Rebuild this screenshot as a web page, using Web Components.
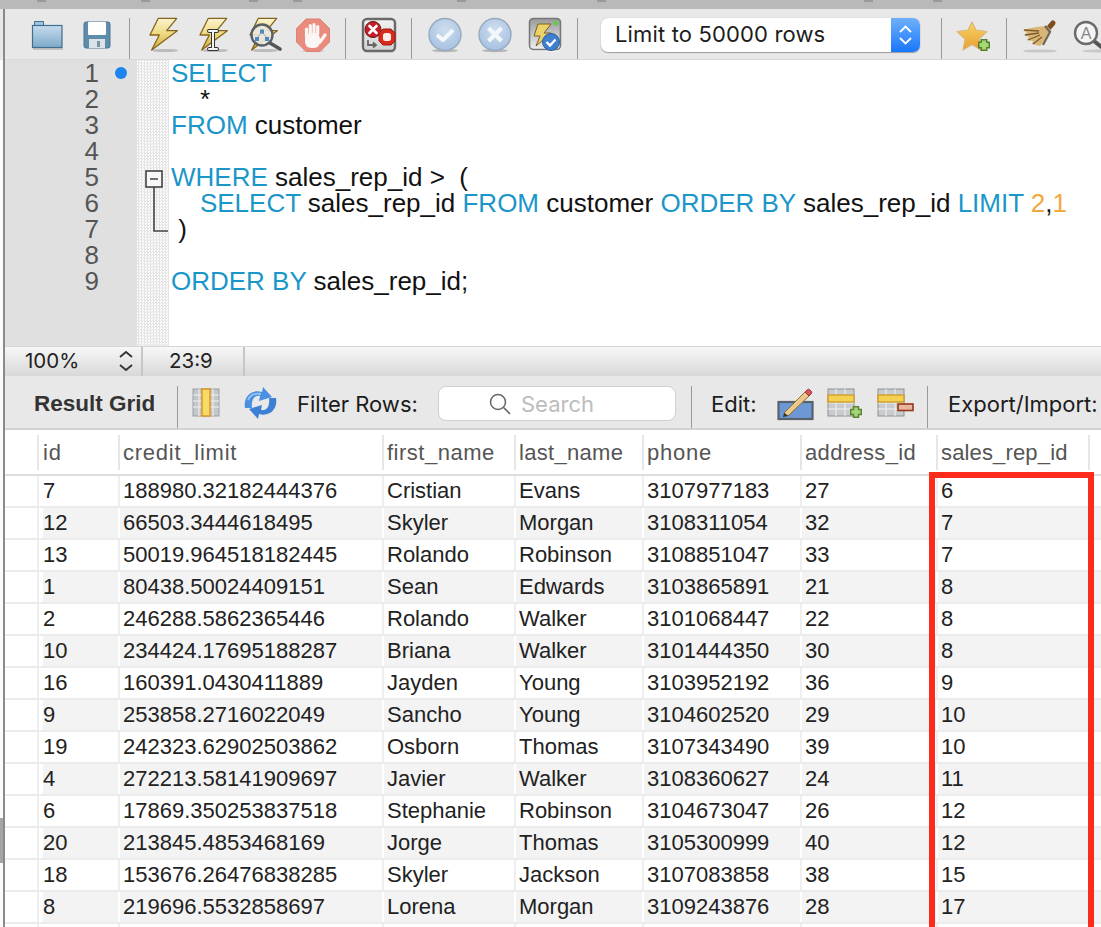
<!doctype html>
<html>
<head>
<meta charset="utf-8">
<title>Query</title>
<style>
  html, body { margin: 0; padding: 0; background: #fff; }
</style>
</head>
<body>
<wb-app>
  <wb-toolbar></wb-toolbar>
  <wb-editor></wb-editor>
  <wb-status></wb-status>
  <wb-result-bar></wb-result-bar>
  <wb-grid></wb-grid>
</wb-app>
<script>
const boltPts = '13.3,2.3 31.7,2.3 21.7,14.7 32.3,14.7 6.7,34 14.3,19 5,19';
const boltDefs = `<defs><linearGradient id="b" x1="0" y1="0" x2="0" y2="1"><stop offset="0" stop-color="#fbf5d2"/><stop offset=".45" stop-color="#efdb86"/><stop offset="1" stop-color="#d4ac3a"/></linearGradient></defs>`;
const bolt = `${boltDefs}<ellipse cx="20" cy="34.5" rx="13" ry="1.6" fill="#bbb"/><polygon points="${boltPts}" fill="url(#b)" stroke="#85651d" stroke-width="1.3" stroke-linejoin="round"/>`;
const roundDefs = `<defs><radialGradient id="r" cx=".5" cy=".35" r=".7"><stop offset="0" stop-color="#cfdeee"/><stop offset="1" stop-color="#a3bfe0"/></radialGradient></defs><ellipse cx="18" cy="34.6" rx="13" ry="1.6" fill="#b5b5b5"/><circle cx="18" cy="18.5" r="16" fill="url(#r)" stroke="#97a9bf" stroke-width="1.4"/>`;

const ICONS = {
  folder: `<defs><linearGradient id="f" x1="0" y1="0" x2="0" y2="1"><stop offset="0" stop-color="#c6dcee"/><stop offset="1" stop-color="#7ea9c8"/></linearGradient></defs>
    <rect x="4" y="32" width="30" height="2" fill="#c4c4c4"/>
    <path d="M5.5 9V5.5h9V9" fill="#a6c6de" stroke="#3d6f91"/><rect x="3.5" y="9.5" width="29.5" height="22" fill="url(#f)" stroke="#3d6f91" stroke-width="1.2"/>`,
  floppy: `<rect x="5" y="6" width="26" height="26" rx="2" fill="#5e8dac" stroke="#4a7492"/><rect x="9" y="6" width="18" height="13" rx="1" fill="#fff"/><rect x="10" y="23" width="16" height="9" fill="#dbe3e8"/><rect x="18" y="25" width="3" height="6" fill="#7f929f"/>`,
  bolt: bolt,
  boltI: `${bolt}<path d="M14 15h8M18 15v18M14 33h8" fill="none" stroke="#333" stroke-width="4" stroke-linecap="round"/><path d="M14 15h8M18 15v18M14 33h8" fill="none" stroke="#f4f4f4" stroke-width="2" stroke-linecap="round"/>`,
  boltFind: `${bolt}<path d="M25 27L35 33" stroke="#555" stroke-width="3.6" stroke-linecap="round"/><circle cx="17" cy="19" r="10.5" fill="#e9e8dc" fill-opacity=".9" stroke="#5a5f66" stroke-width="2.4"/><path d="M12 22l5-6 5 6" fill="none" stroke="#8ea9cf"/><rect x="15" y="13.5" width="4" height="4" fill="#4d85c9"/><rect x="10" y="21" width="4" height="4" fill="#4d85c9"/><rect x="20" y="21" width="4" height="4" fill="#4d85c9"/>`,
  stop: `<ellipse cx="18" cy="35" rx="12" ry="1.2" fill="#ccc"/><polygon points="11,3 25,3 34.5,12.5 34.5,26 25,35.5 11,35.5 1.5,26 1.5,12.5" fill="#e98c7d" stroke="#dc8273" stroke-width="1"/>
    <g stroke="#fbf5f3" stroke-width="3.2" stroke-linecap="round" fill="none"><path d="M11.5 21V13M15.3 18V9.5M19 18V8.5M22.7 18V10.5M25 26L30 19"/></g><rect x="10" y="17" width="15" height="15" rx="6" fill="#fbf5f3"/>`,
  stopErr: `<defs><linearGradient id="s" x1="0" y1="0" x2="0" y2="1"><stop offset="0" stop-color="#f2f2f2"/><stop offset="1" stop-color="#d2d2d2"/></linearGradient></defs><rect x="2" y="3" width="32" height="32" rx="4" fill="url(#s)" stroke="#6a6a6a" stroke-width="2.4"/>
    <circle cx="12" cy="13.5" r="8" fill="#c41f2b" stroke="#611"/><path d="M8.5 10l7 7M15.5 10l-7 7" stroke="#fff" stroke-width="2.6" stroke-linecap="round"/>
    <polygon points="22,13 30,13 34,17 34,25 30,29 22,29 18,25 18,17" fill="#d92b1c" stroke="#9c1d12"/><rect x="22" y="17" width="8" height="8" rx="2.5" fill="#fdeee9"/>
    <path d="M7 24v5h7M12 26.5l3 2.5-3 2.5" fill="none" stroke="#666" stroke-width="1.8"/>`,
  check: `${roundDefs}<path d="M10 19l6 5 10-10" fill="none" stroke="#f3f7fb" stroke-width="4" stroke-linejoin="round"/>`,
  cross: `${roundDefs}<path d="M11.5 12l13 13M24.500 12l-13 13" fill="none" stroke="#f3f7fb" stroke-width="4.2"/>`,
  toggle: `<defs><linearGradient id="s" x1="0" y1="0" x2="0" y2="1"><stop offset="0" stop-color="#9a9a9a"/><stop offset="1" stop-color="#efefef"/></linearGradient></defs><rect x="1.500" y="2.500" width="33" height="33" rx="5" fill="#f4f4f4"/><rect x="2.500" y="2.500" width="31" height="31" rx="4" fill="url(#s)" stroke="#777" stroke-width="1.6"/>
    <polygon points="11,8 24,8 17,17 24,17 9,30 13,20 7,20" fill="#ecd26a" stroke="#7d6120"/><circle cx="29" cy="7" r="2.500" fill="#63c850"/><circle cx="24" cy="26" r="8.500" fill="#3f7fcf" stroke="#2f5f9f"/><path d="M19.500 26l3.500 3.500 5.500-6" fill="none" stroke="#fff" stroke-width="2.400"/>`,
  star: `<defs><linearGradient id="t" x1="0" y1="0" x2="0" y2="1"><stop offset="0" stop-color="#f5d66b"/><stop offset="1" stop-color="#eb9d2c"/></linearGradient><filter id="g" x="-20%" y="-20%" width="140%" height="140%"><feGaussianBlur stdDeviation=".5"/></filter></defs>
    <polygon points="15,6 19,14 30,15.500 22,23 24,34 15,28.500 6,34 8,23 0,15.500 11,14" fill="url(#t)" stroke="#d8b878" stroke-width="1.200" stroke-linejoin="round" filter="url(#g)"/>
    <path d="M27 23v12M21 29h12" stroke="#56802c" stroke-width="7"/><path d="M27 24.500v9M22.500 29h9" stroke="#a7d777" stroke-width="4"/>`,
  broom: `<ellipse cx="18" cy="35" rx="17" ry="1.600" fill="#c8c8c8"/><path d="M25 14l6-7" stroke="#7d4d1c" stroke-width="5" stroke-linecap="round"/><path d="M25 10L14 11 1 14l4 3-3 2 5 2-2 3 6 1-1 3 8 2 8-9 3-7z" fill="#d8b677"/>
    <path d="M2 14l15 1M3 19l14-2M6 24l12-5M11 28l9-7" stroke="#7f5b2a" stroke-width="1.300" fill="none"/><path d="M23 10l5 6-7 13" fill="none" stroke="#6f675a" stroke-width="2.200"/>`,
  inspect: `<ellipse cx="24" cy="35" rx="14" ry="1.500" fill="#c8c8c8"/><path d="M22 25l10 8" stroke="#555" stroke-width="4" stroke-linecap="round"/><circle cx="14" cy="17" r="11" fill="#f4f4f4" stroke="#6a6a6a" stroke-width="2.400"/><text x="14" y="23" text-anchor="middle" font-family="Liberation Sans, sans-serif" font-size="16" fill="#888">A</text>`,
  gridCol: `<rect x="4" y="3" width="26" height="27" fill="#c3c7cb" stroke="#9a9da0"/><path d="M4 9h26M4 15h26M4 21h26M10 3v27M24 3v27" stroke="#f0f0f0"/><rect x="13" y="3" width="8" height="27" fill="#f6dc62" stroke="#dc9a2c" stroke-width="1.600"/>`,
  refresh: `<path d="M2 22C0 11 8 3 19 6l1-5 9 10-13 4 1-5c-6-1-9 4-8 12z" fill="#4a90e2"/><path d="M33 12c2 11-6 19-17 16l-1 5-9-10 13-4-1 5c6 1 9-4 8-12z" fill="#3d7fd4"/><path d="M5 14c2-5 7-7 13-6" stroke="#9cc6f2" stroke-width="1.800" fill="none"/>`,
  pencil: `<rect x="1.500" y="16" width="34" height="17" fill="#6c98d6" stroke="#59626b" stroke-width="2.200"/><path d="M7 27L28 6l4 4L11 30z" fill="#eac98a" stroke="#8d6a2c"/><path d="M7 27l-1 4 5-1z" fill="#333"/><path d="M28 6l2-2c1-1 2-1 3 0l1 1c1 1 1 2 0 3l-2 2z" fill="#d8545c" stroke="#9c3138"/>`,
  tableAdd: `<rect x="1" y="3" width="26" height="27" fill="#c9cccf" stroke="#8c9094"/><path d="M1 17h26M1 23h26M9 3v27M18 3v27M1 9h26" stroke="#f2f2f2"/><rect x="1" y="9" width="26" height="7" fill="#f3d253" stroke="#cf9a2a" stroke-width="1.400"/>
    <path d="M29 20v12M23 26h12" stroke="#5a8430" stroke-width="6.500"/><path d="M29 21.500v9M24.500 26h9" stroke="#a5d67a" stroke-width="3.500"/>`,
  tableDel: `<rect x="1" y="3" width="26" height="27" fill="#c9cccf" stroke="#8c9094"/><path d="M1 17h26M1 23h26M9 3v27M18 3v27M1 9h26" stroke="#f2f2f2"/><rect x="1" y="9" width="26" height="7" fill="#f3d253" stroke="#cf9a2a" stroke-width="1.400"/>
    <rect x="21" y="18" width="15" height="6.500" fill="#e9b59f" stroke="#92391a" stroke-width="1.600"/>`
};

class WbIcon extends HTMLElement {
  connectedCallback() {
    const size = this.getAttribute('size') || 36;
    const slot = this.getAttribute('slot-width') || 50;
    this.attachShadow({ mode: 'open' }).innerHTML = `
      <style>
        :host { display: flex; flex: none; width: ${slot}px; height: ${size}px; justify-content: center; }
        svg { display: block; flex: none; overflow: visible; }
      </style>
      <svg width="${size}" height="${size}" viewBox="0 0 36 36">${ICONS[this.getAttribute('name')]}</svg>`;
  }
}
customElements.define('wb-icon', WbIcon);

class WbApp extends HTMLElement {
  constructor() {
    super();
    this.attachShadow({ mode: 'open' }).innerHTML = `
      <style>
        :host { display: flex; width: 1101px; height: 927px; overflow: hidden; position: relative; font-family: "Liberation Sans", Arial, sans-serif; }
        .edge { flex: none; width: 3px; display: flex; flex-direction: column; background: #fbfbfb; }
        .edge .top { height: 9px; background: #b9b9b9; }
        .edge .tb { height: 51px; background: #e8e8e8; }
        .edge .gap { height: 758px; }
        .edge .thumb { height: 45px; background: #a9a4a4; }
        .line { flex: none; width: 2px; background: #8a8a8a; }
        .main { flex: 1; min-width: 0; display: flex; flex-direction: column; }
        .topbar { flex: none; height: 9px; background-color: #b9b9b9; margin-left: -2px;
          background-repeat: no-repeat; background-size: 9px 2px;
          background-image: linear-gradient(#9a9a9a,#9a9a9a), linear-gradient(#9a9a9a,#9a9a9a), linear-gradient(#9a9a9a,#9a9a9a), linear-gradient(#9a9a9a,#9a9a9a), linear-gradient(#9a9a9a,#9a9a9a), linear-gradient(#9a9a9a,#9a9a9a), linear-gradient(#9a9a9a,#9a9a9a), linear-gradient(#9a9a9a,#9a9a9a);
          background-position: 34px 0, 138px 0, 246px 0, 290px 0, 454px 0, 594px 0, 861px 0, 930px 0; }
      </style>
      <div class="edge"><div class="top"></div><div class="tb"></div><div class="gap"></div><div class="thumb"></div></div>
      <div class="line"></div>
      <div class="main"><div class="topbar"></div><slot></slot></div>`;
  }
}
customElements.define('wb-app', WbApp);

class WbToolbar extends HTMLElement {
  constructor() {
    super();
    const icon = n => `<wb-icon name="${n}"></wb-icon>`;
    this.attachShadow({ mode: 'open' }).innerHTML = `
      <style>
        :host { display: flex; flex: none; height: 51px; padding-left: 17px; background: #e8e8e8; overflow: hidden; box-sizing: border-box; align-items: flex-start; border-bottom: 1px solid #d8d8d8; position: relative; z-index: 1; }
        wb-icon { margin-top: 7px; }
        .sep { flex: none; width: 1px; height: 42px; margin: 9px 8px 0 7px; background: #9a9a9a; }
        .select { flex: none; box-sizing: border-box; width: 319px; height: 34px; margin: 9px 0 0 15px; display: flex; border-radius: 7px; background: #fff; box-shadow: 0 1px 1px #9d9d9d, 0 0 1px #aaa; overflow: hidden; }
        .select span { flex: 1; padding-left: 14px; font: 22px/33px "Inter", sans-serif; color: #1c1c1c; letter-spacing: .15px; white-space: nowrap; }
        .select i { flex: none; width: 29px; background: linear-gradient(#6fb0fb, #1877fb); display: flex; align-items: center; justify-content: center; }
      </style>
      ${icon('folder')}${icon('floppy')}
      <div class="sep"></div>
      ${icon('bolt')}${icon('boltI')}${icon('boltFind')}${icon('stop')}
      <div class="sep"></div>
      ${icon('stopErr')}
      <div class="sep"></div>
      ${icon('check')}${icon('cross')}${icon('toggle')}
      <div class="sep"></div>
      <div class="select"><span>Limit to 50000 rows</span><i><svg width="15" height="24" viewBox="0 0 15 24"><path d="M2 9l5.500-5.500L13 9M2 15l5.500 5.500L13 15" fill="none" stroke="#fff" stroke-width="1.800"/></svg></i></div>
      <div class="sep" style="margin-left:21px"></div>
      ${icon('star')}
      <div class="sep" style="margin-left:6px"></div>
      ${icon('broom')}${icon('inspect')}`;
  }
}
customElements.define('wb-toolbar', WbToolbar);

class WbEditor extends HTMLElement {
  constructor() {
    super();
    const k = s => `<b>${s}</b>`;
    const lines = [
      k('SELECT'),
      '    *',
      `${k('FROM')} customer`,
      '',
      `${k('WHERE')} sales_rep_id &gt;  (`,
      `    ${k('SELECT')} sales_rep_id ${k('FROM')} customer ${k('ORDER BY')} sales_rep_id ${k('LIMIT')} <u>2</u>,<u>1</u>`,
      ' )',
      '',
      `${k('ORDER BY')} sales_rep_id;`
    ];
    this.attachShadow({ mode: 'open' }).innerHTML = `
      <style>
        :host { display: flex; flex: none; height: 286px; box-sizing: border-box; background: #fff; font: 26px/26px "Liberation Sans", Arial, sans-serif; }
        .nums { flex: none; width: 94px; background: #e0e0e0; color: #555; text-align: right; }
        .marks { flex: none; width: 38px; background: #e0e0e0; position: relative; }
        .dot { position: absolute; left: 16px; top: 7px; width: 12px; height: 12px; border-radius: 50%; background: #1b84ee; }
        .fold { flex: none; width: 32px; position: relative;
          background: repeating-conic-gradient(#e4e4e4 0 25%, #fbfbfb 0 50%) 0 0 / 3px 3px; }
        .fold svg { position: absolute; left: 0; top: 0; }
        .code { flex: 1; padding-left: 2px; white-space: pre; color: #111; }
        .code div { height: 26px; }
        b { font-weight: normal; color: #1b96c9; }
        u { text-decoration: none; color: #f2a93b; }
      </style>
      <div class="nums">${[1,2,3,4,5,6,7,8,9].map(n => `<div>${n}</div>`).join('')}</div>
      <div class="marks"><div class="dot"></div></div>
      <div class="fold"><svg width="32" height="180" viewBox="0 0 32 180"><rect x="9" y="111" width="16" height="16" fill="#f8f8f8" stroke="#444" stroke-width="1.600"/><path d="M13 119h8M17 127v44h14" fill="none" stroke="#444" stroke-width="1.600"/></svg></div>
      <div class="code">${lines.map(l => `<div>${l}</div>`).join('')}</div>`;
  }
}
customElements.define('wb-editor', WbEditor);

class WbStatus extends HTMLElement {
  constructor() {
    super();
    this.attachShadow({ mode: 'open' }).innerHTML = `
      <style>
        :host { display: flex; flex: none; height: 30px; box-sizing: border-box; border-top: 1px solid #d6d6d6; background: linear-gradient(#f7f7f7, #d8d8d8); font: 20.500px/28px "Inter", "Liberation Sans", sans-serif; color: #222; }
        .zoom { flex: none; width: 138px; box-sizing: border-box; padding-left: 20px; display: flex; border-right: 2px solid #c6c6c6; }
        .zoom span { flex: 1; }
        .zoom svg { flex: none; margin: 1px 7px 0 0; }
        .pos { flex: none; width: 102px; box-sizing: border-box; padding-left: 26px; border-right: 2px solid #c6c6c6; }
      </style>
      <div class="zoom"><span>100%</span><svg width="16" height="26" viewBox="0 0 16 26"><path d="M2 9l6-5 6 5M2 17l6 5 6-5" fill="none" stroke="#333" stroke-width="1.800"/></svg></div>
      <div class="pos">23:9</div>`;
  }
}
customElements.define('wb-status', WbStatus);

class WbResultBar extends HTMLElement {
  constructor() {
    super();
    this.attachShadow({ mode: 'open' }).innerHTML = `
      <style>
        :host { display: flex; flex: none; height: 54px; box-sizing: border-box; padding: 3px 0 0 29px; align-items: center; background: #e8e8e8; border-bottom: 2px solid #d2d2d2; font: 22px/30px "Inter", "Liberation Sans", sans-serif; color: #1c1c1c; white-space: nowrap; overflow: hidden; }
        .sep { flex: none; width: 1px; align-self: flex-end; height: 42px; background: #9a9a9a; }
        .title { flex: none; width: 143px; font: bold 22.500px/30px "Liberation Sans", Arial, sans-serif; color: #333; }
        .filter { flex: none; width: 141px; }
        .search { flex: none; box-sizing: border-box; width: 238px; height: 35px; padding-left: 49px; display: flex; align-items: center; gap: 9px; background: #fff; border: 1px solid #cfcfcf; border-radius: 8px; color: #bdbdbd; }
        .edit { flex: none; width: 66px; }
      </style>
      <div class="title">Result Grid</div>
      <div class="sep"></div>
      <wb-icon name="gridCol" slot-width="36" style="margin-left:11px"></wb-icon>
      <wb-icon name="refresh" slot-width="34" style="margin-left:19px"></wb-icon>
      <div class="filter" style="margin-left:19px">Filter Rows:</div>
      <div class="search"><svg width="24" height="24" viewBox="0 0 24 24"><circle cx="10" cy="10" r="7.500" fill="none" stroke="#666" stroke-width="1.500"/><path d="M15.500 15.500L22 22" stroke="#666" stroke-width="1.600"/></svg><span>Search</span></div>
      <div class="sep" style="margin-left:15px"></div>
      <div class="edit" style="margin-left:19px">Edit:</div>
      <wb-icon name="pencil" slot-width="36"></wb-icon>
      <wb-icon name="tableAdd" slot-width="36" style="margin-left:14px"></wb-icon>
      <wb-icon name="tableDel" slot-width="36" style="margin-left:14px"></wb-icon>
      <div class="sep" style="margin-left:14px"></div>
      <div style="margin-left:20px">Export/Import:</div>`;
  }
}
customElements.define('wb-result-bar', WbResultBar);

const COLS = ['id', 'credit_limit', 'first_name', 'last_name', 'phone', 'address_id', 'sales_rep_id'];
const HEAD_SPACING = [.75, .75, .5, .3, .75, .35, .15];
const ROWS = [
  ['7', '188980.32182444376', 'Cristian', 'Evans', '3107977183', '27', '6'],
  ['12', '66503.3444618495', 'Skyler', 'Morgan', '3108311054', '32', '7'],
  ['13', '50019.964518182445', 'Rolando', 'Robinson', '3108851047', '33', '7'],
  ['1', '80438.50024409151', 'Sean', 'Edwards', '3103865891', '21', '8'],
  ['2', '246288.5862365446', 'Rolando', 'Walker', '3101068447', '22', '8'],
  ['10', '234424.17695188287', 'Briana', 'Walker', '3101444350', '30', '8'],
  ['16', '160391.0430411889', 'Jayden', 'Young', '3103952192', '36', '9'],
  ['9', '253858.2716022049', 'Sancho', 'Young', '3104602520', '29', '10'],
  ['19', '242323.62902503862', 'Osborn', 'Thomas', '3107343490', '39', '10'],
  ['4', '272213.58141909697', 'Javier', 'Walker', '3108360627', '24', '11'],
  ['6', '17869.350253837518', 'Stephanie', 'Robinson', '3104673047', '26', '12'],
  ['20', '213845.4853468169', 'Jorge', 'Thomas', '3105300999', '40', '12'],
  ['18', '153676.26476838285', 'Skyler', 'Jackson', '3107083858', '38', '15'],
  ['8', '219696.5532858697', 'Lorena', 'Morgan', '3109243876', '28', '17'],
  ['', '', '', '', '', '', '']
];

class WbGrid extends HTMLElement {
  constructor() {
    super();
    const cells = r => r.map((c, i) => `<span class="c${i}">${c}</span>`).join('');
    const head = COLS.map((c, i) => `<span class="c${i}" style="letter-spacing:${HEAD_SPACING[i]}px">${c}</span>`).join('');
    this.attachShadow({ mode: 'open' }).innerHTML = `
      <style>
        :host { display: block; flex: 1; min-height: 0; position: relative; background: #fff; overflow: hidden; }
        .row { display: grid; grid-template-columns: 32px 81px 264px 132px 128px 158px 136px 152px 1fr; height: 32px; box-sizing: border-box; border-bottom: 2px solid #ececec; font: 22px/30px "Liberation Sans", Arial, sans-serif; color: #222; }
        .row::before { content: ""; }
        .row span { display: block; box-sizing: border-box; padding-left: 3px; border-left: 2px solid #efefef; white-space: nowrap; overflow: hidden; }
        .row span.c0 { padding-left: 4px; }
        .row::after { content: ""; border-left: 2px solid #efefef; }
        .row:nth-child(even) span { background: #f3f3f3; border-left-color: #fff; }
        .row:nth-child(even)::after { background: #f3f3f3; border-left-color: #fff; }
        .row:nth-child(even) span.c0 { background: linear-gradient(90deg, #fff 4px, #f3f3f3 4px); border-left-color: #efefef; }
        .row.head { height: 46px; border-bottom: 2px solid #dedede; color: #555; font: 22px/46px "Liberation Sans", Arial, sans-serif; }
        .row.head span, .row.head::after { border-left-width: 0; padding-left: 5px;
          background: linear-gradient(#e6e6e6, #e6e6e6) 0 5px / 2px 35px no-repeat; }
        .row.head span.c0 { padding-left: 6px; background: linear-gradient(#e6e6e6, #e6e6e6) 0 5px / 2px 35px no-repeat; }
        .box { position: absolute; left: 924px; top: 42px; width: 165px; height: 600px; box-sizing: border-box; border: 6px solid #fc2b1c; border-bottom: none; }
      </style>
      <div class="head row">${head}</div>
      ${ROWS.map(r => `<div class="row">${cells(r)}</div>`).join('')}
      <div class="box"></div>`;
  }
}
customElements.define('wb-grid', WbGrid);
</script>
</body>
</html>
